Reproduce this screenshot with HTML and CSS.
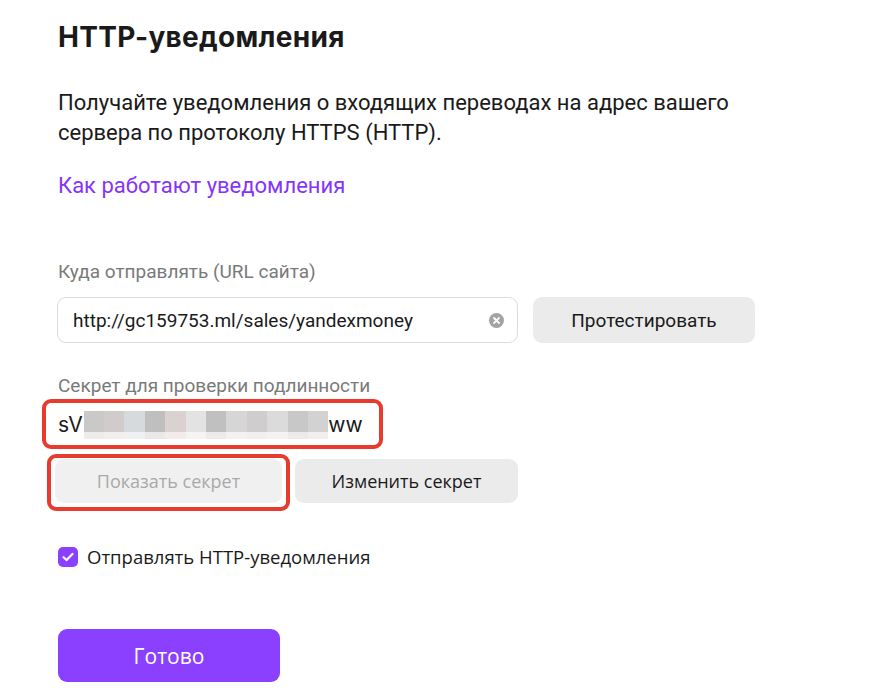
FILE: index.html
```html
<!DOCTYPE html>
<html lang="ru">
<head>
<meta charset="utf-8">
<link rel="stylesheet" href="styles.css">
</head>
<body>
<main class="page">
  <h1 class="title">HTTP-уведомления</h1>
  <p class="desc">Получайте уведомления о входящих переводах на адрес вашего сервера по протоколу HTTPS (HTTP).</p>
  <a class="link" href="#">Как работают уведомления</a>

  <div class="field">
    <div class="label">Куда отправлять (URL сайта)</div>
    <div class="row">
      <div class="input">
        <span class="input-text">http://gc159753.ml/sales/yandexmoney</span>
        <svg class="clear" width="15" height="15" viewBox="0 0 15 15"><circle cx="7.5" cy="7.5" r="7.5" fill="#a3a3a3"/><path d="M5 5 L10 10 M10 5 L5 10" stroke="#fff" stroke-width="1.8" stroke-linecap="round"/></svg>
      </div>
      <button class="btn btn-test">Протестировать</button>
    </div>
  </div>

  <div class="field field-secret">
    <div class="label">Секрет для проверки подлинности</div>
    <div class="secret-box">
      <span>sV</span>
      <span class="blur">
        <i style="background:#c9c9c9"></i><i style="background:#d1cccb"></i><i style="background:#d6dadc"></i><i style="background:#bfbfbf"></i><i style="background:#d9d2d1"></i><i style="background:#e3e3e3"></i><i style="background:#c0c0c0"></i><i style="background:#d6d6d6"></i><i style="background:#cfcdcd"></i><i style="background:#dbdbdb"></i><i style="background:#c8c8c8"></i><i style="background:#d2d2d2"></i>
        <i style="background:#ececec"></i><i style="background:#f1eeee"></i><i style="background:#eef1f3"></i><i style="background:#e9e9e9"></i><i style="background:#f3ecec"></i><i style="background:#f4f4f4"></i><i style="background:#ebebeb"></i><i style="background:#f2f2f2"></i><i style="background:#efefef"></i><i style="background:#f3f3f3"></i><i style="background:#ebebeb"></i><i style="background:#efefef"></i>
      </span>
      <span>ww</span>
    </div>
    <div class="secret-actions">
      <div class="mark">
        <button class="btn btn-disabled">Показать секрет</button>
      </div>
      <button class="btn btn-change">Изменить секрет</button>
    </div>
  </div>

  <label class="check">
    <span class="box"><svg width="12" height="10" viewBox="0 0 12 10"><path d="M1.5 5.2 L4.6 8 L10.5 2" fill="none" stroke="#fff" stroke-width="2.2" stroke-linecap="round" stroke-linejoin="round"/></svg></span>
    <span>Отправлять HTTP-уведомления</span>
  </label>

  <button class="btn btn-primary">Готово</button>
</main>
</body>
</html>
```
FILE: styles.css
```css
* { box-sizing: border-box; }
body {
  margin: 0;
  background: #fff;
  color: #1a1a1a;
  font-family: "Open Sans", "Liberation Sans", sans-serif;
}
.page {
  padding: 20px 0 0 58px;
  display: flex;
  flex-direction: column;
  align-items: flex-start;
}
.title {
  margin: 0;
  font-family: "Inter", "Liberation Sans", sans-serif;
  font-size: 28px;
  font-weight: 700;
  line-height: 34px;
  letter-spacing: 0.3px;
}
.desc {
  margin: 34px 0 0;
  width: 720px;
  font-family: "Roboto", "Liberation Sans", sans-serif;
  font-size: 22px;
  line-height: 30px;
}
.link {
  margin-top: 25px;
  font-family: "Roboto", "Liberation Sans", sans-serif;
  font-size: 22px;
  line-height: 26px;
  color: #8434fc;
  text-decoration: none;
}
.field {
  margin-top: 62px;
}
.label {
  font-family: "Roboto", "Liberation Sans", sans-serif;
  font-size: 19px;
  line-height: 22px;
  color: #7a7a7a;
}
.row {
  display: flex;
  gap: 15px;
  margin-top: 14px;
}
.input {
  width: 461px;
  height: 46px;
  margin-left: -1px;
  border: 1.5px solid #dcdcdc;
  border-radius: 9px;
  display: flex;
  align-items: center;
  justify-content: space-between;
  padding: 0 13px 0 15px;
}
.input-text {
  font-family: "Roboto", "Liberation Sans", sans-serif;
  font-size: 19px;
  color: #1a1a1a;
}
.btn {
  border: none;
  border-radius: 9px;
  font-family: "Open Sans", "Liberation Sans", sans-serif;
  font-size: 18px;
  color: #1a1a1a;
  background: #ebebeb;
  height: 45px;
  padding: 0;
}
.btn-test {
  width: 222px;
  height: 46px;
  font-family: "Roboto", "Liberation Sans", sans-serif;
  font-size: 19px;
}
.field-secret {
  margin-top: 32px;
}
.secret-box {
  margin: 2px 0 0 -16px;
  width: 341px;
  height: 50px;
  border: 4px solid #e63b2e;
  border-radius: 9px;
  display: flex;
  align-items: center;
  padding-left: 12px;
  font-family: "Inter", "Liberation Sans", sans-serif;
  font-size: 21px;
  color: #1a1a1a;
}
.blur {
  display: grid;
  grid-template-columns: repeat(12, 20.4px);
  grid-template-rows: 21px 7px;
  margin: 2px 0 0 1px;
}
.blur i { display: block; }
.secret-actions {
  display: flex;
  align-items: flex-start;
  gap: 5px;
  margin: 5px 0 0 -11px;
}
.mark {
  border: 4px solid #e63b2e;
  border-radius: 9px;
  padding: 1px 4px 4px 4px;
}
.btn-disabled {
  width: 227px;
  height: 44px;
  background: #f0f0f0;
  color: #a9a9a9;
}
.btn-change {
  width: 223px;
  height: 44px;
  margin-top: 5px;
}
.check {
  margin-top: 33px;
  display: flex;
  align-items: center;
  gap: 9px;
  font-family: "Open Sans", "Liberation Sans", sans-serif;
  font-size: 18.5px;
  color: #1a1a1a;
}
.box {
  width: 20px;
  height: 20px;
  border-radius: 5px;
  background: #8c40ff;
  display: flex;
  align-items: center;
  justify-content: center;
}
.btn-primary {
  margin-top: 60px;
  width: 222px;
  height: 53px;
  background: #8c40ff;
  color: #fff;
  font-size: 21px;
}
```
